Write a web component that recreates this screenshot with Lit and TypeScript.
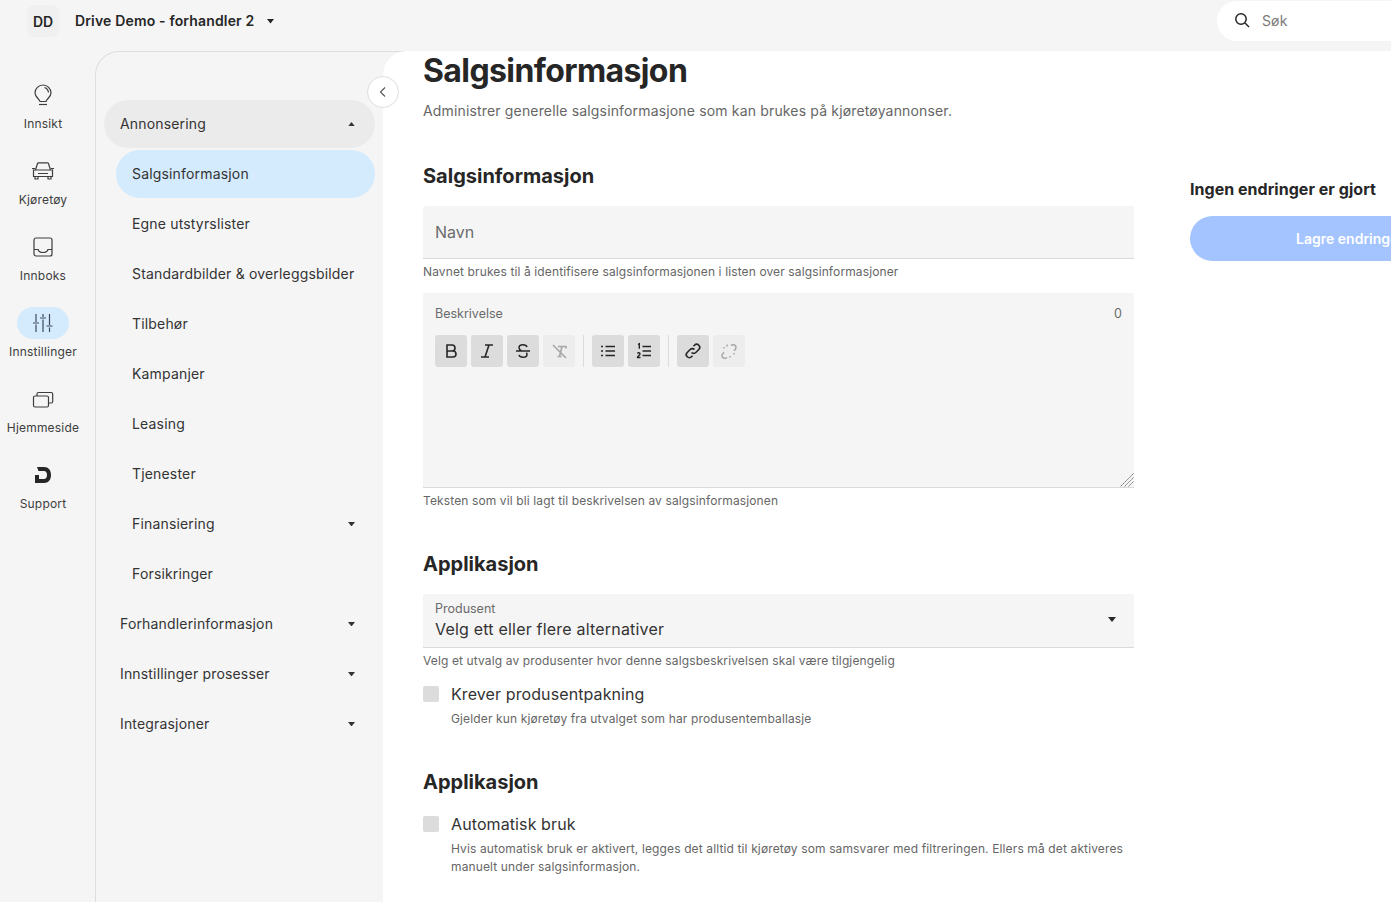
import { LitElement, html, css, svg } from "lit";
import { customElement } from "lit/decorators.js";

const caretDown = html`<svg class="caret" viewBox="0 0 8 5" width="7" height="4.500"><path d="M0 0h8L4 5z" fill="currentColor"/></svg>`;
const caretUp = html`<svg class="caret" viewBox="0 0 8 5" width="7" height="4.500"><path d="M0 5h8L4 0z" fill="currentColor"/></svg>`;
const caretLarge = html`<svg class="caret" viewBox="0 0 8 5" width="8" height="5"><path d="M0 0h8L4 5z" fill="currentColor"/></svg>`;

const railIcons: Record<string, unknown> = {
  bulb: svg`<path d="M10 19.500C9.500 17 5 15 5 11a8 8 0 0 1 16 0c0 4-4.500 6-5 8.500z"/><path d="M14.500 5.500a6 6 0 0 1 4 5"/><path d="M9 22.500h8"/>`,
  car: svg`<path d="M3.500 12h19v6.500h-19z"/><path d="M5.500 12l2-6.500c.1-.4.5-.7 1-.7h9c.5 0 .9.3 1 .7l2 6.500"/><path d="M2 10.500h3M21 10.500h3"/><path d="M5 18.500V21h3v-2.500M18 18.500V21h3v-2.500M8 15.500h10"/>`,
  inbox: svg`<rect x="4" y="4" width="18" height="18" rx="2"/><path d="M4 15.500h4c.8 2.500 2.300 3 5 3s4.200-.5 5-3h4"/>`,
  sliders: svg`<path d="M6 4v8M6 14.500V22M3 13h6M13 4v3M13 9.500V22M10 8h6M19.500 4v11M19.500 17.500V22M16.500 16h6"/>`,
  windows: svg`<rect x="3.500" y="10" width="15" height="11" rx="1.500"/><path d="M7 10V8a1.500 1.500 0 0 1 1.500-1.500h12.700a1.500 1.500 0 0 1 1.500 1.500v7.500a1.500 1.500 0 0 1-1.500 1.500h-2.700"/>`,
};

const railItems = [
  { icon: "bulb", label: "Innsikt" },
  { icon: "car", label: "Kjøretøy" },
  { icon: "inbox", label: "Innboks" },
  { icon: "sliders", label: "Innstillinger", active: true },
  { icon: "windows", label: "Hjemmeside" },
  { icon: "logo", label: "Support" },
];

type NavItem = { label: string; sub?: boolean; open?: boolean; selected?: boolean; caret?: "up" | "down" };
const navItems: NavItem[] = [
  { label: "Annonsering", open: true, caret: "up" },
  { label: "Salgsinformasjon", sub: true, selected: true },
  { label: "Egne utstyrslister", sub: true },
  { label: "Standardbilder & overleggsbilder", sub: true },
  { label: "Tilbehør", sub: true },
  { label: "Kampanjer", sub: true },
  { label: "Leasing", sub: true },
  { label: "Tjenester", sub: true },
  { label: "Finansiering", sub: true, caret: "down" },
  { label: "Forsikringer", sub: true },
  { label: "Forhandlerinformasjon", caret: "down" },
  { label: "Innstillinger prosesser", caret: "down" },
  { label: "Integrasjoner", caret: "down" },
];

const tool = (d: unknown, off = false) => html`<button class="tool ${off ? "off" : ""}"><svg viewBox="0 0 20 20" width="20" height="20" fill="none" stroke="currentColor" stroke-width="1.500">${d}</svg></button>`;

@customElement("app-root")
export class AppRoot extends LitElement {
  static styles = css`
    :host { display: block; width: 1391px; height: 902px; overflow: hidden; background: #f5f5f5; color: #262626; font-family: Inter, "Liberation Sans", sans-serif; font-size: 14px; letter-spacing: 0.17px; position: relative; }
    * { box-sizing: border-box; }
    .top { height: 51px; display: flex; align-items: flex-start; padding-left: 27px; }
    .avatar { width: 32px; height: 32px; margin-top: 5px; border-radius: 8px; background: #f0f0f0; display: flex; align-items: center; justify-content: center; font-weight: 600; font-size: 14px; letter-spacing: 0; }
    .org { margin: 13px 0 0 16px; height: 16px; line-height: 16px; font-weight: 600; font-size: 14px; letter-spacing: 0.16px; }
    .top .caret { margin: 19px 0 0 13px; }
    .search { margin: 1px -226px 0 auto; width: 400px; flex: none; height: 40px; border-radius: 20px; background: #fff; display: flex; align-items: center; padding: 0 0 2px 17px; gap: 12px; color: #7a7a7a; font-size: 14px; letter-spacing: 0.14px; }
    .search svg { color: #262626; }
    .body { display: flex; height: 851px; }
    .rail { width: 95px; flex: none; padding: 28px 9px 0 0; display: flex; flex-direction: column; gap: 4px; align-items: center; }
    .rail-item { height: 72px; display: flex; flex-direction: column; align-items: center; font-size: 12px; letter-spacing: 0.2px; color: #3d3d3d; }
    .pill { width: 52px; height: 32px; border-radius: 16px; display: flex; align-items: center; justify-content: center; margin-bottom: 5px; }
    .rail-item.active .pill { background: #d4eafd; }
    .rail-item span { line-height: 16px; white-space: nowrap; }
    .nav { width: 288px; flex: none; border-left: 1px solid #dedede; border-top: 1px solid #dedede; border-top-left-radius: 24px; padding: 48px 8px 0; display: flex; flex-direction: column; gap: 2px; position: relative; }
    .nav-item { height: 48px; border-radius: 24px; display: flex; align-items: center; justify-content: space-between; padding: 0 20px 2px 16px; color: #333; white-space: nowrap; }
    .nav-item .caret { margin-top: 2px; }
    .nav-item.sub { margin-left: 12px; }
    .nav-item.open { background: #ebebeb; }
    .nav-item.selected { background: #d4eafd; }
    .collapse { position: absolute; left: 271px; top: 24px; width: 32px; height: 32px; border-radius: 50%; background: #fff; border: 1px solid #dedede; display: flex; align-items: center; justify-content: center; z-index: 3; padding: 0; color: #555; }
    .topline { position: absolute; left: 287px; top: -1px; width: 24px; height: 1px; background: #dedede; }
    main { flex: 1; min-width: 0; background: #fff; border-top-left-radius: 24px; padding-left: 40px; display: flex; gap: 56px; position: relative; z-index: 2; }
    .content { width: 711px; flex: none; }
    h1 { margin: 0; font-size: 32px; line-height: 40px; font-weight: 700; letter-spacing: -0.6px; }
    .lead { margin: 10px 0 0; line-height: 20px; color: #666; font-size: 14px; letter-spacing: 0.16px; }
    h2 { margin: 0; font-size: 20px; line-height: 28px; font-weight: 700; letter-spacing: 0; }
    .s1 { margin-top: 41px; }
    .field { background: #f5f5f5; border-bottom: 1px solid #d9d9d9; border-radius: 2px 2px 0 0; display: block; width: 100%; position: relative; }
    .input { margin-top: 16px; height: 53px; padding: 0 12px; line-height: 52px; font-size: 16px; color: #6b6b6b; letter-spacing: 0; }
    .hint { font-size: 12px; letter-spacing: 0.12px; line-height: 18px; color: #666; margin: 4px 0 0; }
    .desc { margin-top: 12px; height: 195px; padding: 13px 0 0; }
    .desc-head { display: flex; justify-content: space-between; padding: 0 12px; font-size: 12.500px; letter-spacing: 0; line-height: 16px; color: #6b6b6b; }
    .toolbar { display: flex; gap: 4px; padding: 13px 12px 0; align-items: center; height: 45px; }
    .tool { width: 32px; height: 32px; border: 0; padding: 0; border-radius: 3px; background: #dcdcdc; color: #262626; display: flex; align-items: center; justify-content: center; }
    .tool.off { background: #ededed; color: #a8a8a8; }
    .sep { width: 1px; height: 32px; background: #dcdcdc; margin: 0 4px; }
    textarea { display: block; width: 100%; height: 120px; border: 0; outline: 0; background: transparent; resize: none; padding: 0; margin: 0; }
    .grip { position: absolute; right: 0; bottom: 0; display: block; }
    .s2 { margin-top: 40px; }
    .select { margin-top: 16px; height: 54px; padding: 7px 12px 0; }
    .select small { display: block; font-size: 12.500px; letter-spacing: 0; line-height: 16px; color: #6b6b6b; }
    .select div { font-size: 16px; letter-spacing: 0.2px; line-height: 24px; color: #333; }
    .select .caret { position: absolute; right: 18px; top: 23px; }
    .check { display: flex; align-items: center; gap: 12px; font-size: 16px; letter-spacing: 0.1px; line-height: 24px; color: #333; }
    .box { width: 16px; height: 16px; border-radius: 2px; background: #dcdcdc; flex: none; }
    .help { margin: 4px 0 0 28px; font-size: 12px; letter-spacing: 0.13px; line-height: 18px; color: #666; }
    .c1 { margin-top: 12px; }
    .s3 { margin-top: 40px; }
    .c2 { margin-top: 16px; }
    aside { width: 318px; flex: none; padding-top: 127px; }
    aside h3 { margin: 0; font-size: 16px; line-height: 22px; font-weight: 700; letter-spacing: 0.03px; }
    .save { margin-top: 16px; width: 318px; height: 45px; border: 0; border-radius: 23px; background: #a3c4ff; color: #fff; font: 600 14px Inter, "Liberation Sans", sans-serif; padding: 0 0 1px 2px; }
  `;

  private railIcon(icon: string) {
    if (icon === "logo") {
      return html`<svg viewBox="0 0 26 26" width="26" height="26"><path d="M7 5h7c4.500 0 7 3.200 7 8s-2.500 8-7 8H5v-8h4v4h5c1.800 0 3-1.500 3-4s-1.200-4-3-4H8.500z" fill="#262626"/></svg>`;
    }
    const color = icon === "sliders" ? "#3b4a5a" : "#3d3d3d";
    return html`<svg viewBox="0 0 26 26" width="26" height="26" fill="none" stroke=${color} stroke-width="1.200">${railIcons[icon]}</svg>`;
  }

  render() {
    return html`
      <div class="top">
        <div class="avatar">DD</div>
        <div class="org">Drive Demo - forhandler 2</div>
        ${caretDown}
        <div class="search">
          <svg viewBox="0 0 16 16" width="16" height="16" fill="none" stroke="currentColor" stroke-width="1.500"><circle cx="7" cy="7" r="5.200"/><path d="M11 11l4 4"/></svg>
          <span>Søk</span>
        </div>
      </div>
      <div class="body">
        <div class="rail">
          ${railItems.map((r) => html`<div class="rail-item ${r.active ? "active" : ""}"><div class="pill">${this.railIcon(r.icon)}</div><span>${r.label}</span></div>`)}
        </div>
        <nav class="nav">
          <div class="topline"></div>
          <button class="collapse"><svg viewBox="0 0 12 12" width="12" height="12" fill="none" stroke="currentColor" stroke-width="1.100"><path d="M8 1.500L3.500 6 8 10.500"/></svg></button>
          ${navItems.map((n) => html`<div class="nav-item ${n.sub ? "sub" : ""} ${n.open ? "open" : ""} ${n.selected ? "selected" : ""}"><span>${n.label}</span>${n.caret === "up" ? caretUp : n.caret === "down" ? caretDown : ""}</div>`)}
        </nav>
        <main>
          <div class="content">
            <h1>Salgsinformasjon</h1>
            <p class="lead">Administrer generelle salgsinformasjone som kan brukes på kjøretøyannonser.</p>
            <h2 class="s1">Salgsinformasjon</h2>
            <div class="field input">Navn</div>
            <p class="hint">Navnet brukes til å identifisere salgsinformasjonen i listen over salgsinformasjoner</p>
            <div class="field desc">
              <div class="desc-head"><span>Beskrivelse</span><span>0</span></div>
              <div class="toolbar">
                ${tool(svg`<path d="M6 4h5a3 3 0 0 1 0 6H6zM6 10h6a3 3 0 0 1 0 6H6z" stroke-width="1.600"/>`)}
                ${tool(svg`<path d="M8 4h8M4 16h8M12 4L8 16" stroke-width="1.600"/>`)}
                ${tool(svg`<path d="M3 10h14M14 6c-.5-1.500-2-2.200-4-2.200-2.200 0-4 1-4 3 0 1.500 1 2.400 2.500 3.200M6 14c.5 1.500 2 2.200 4 2.200s4-1 4-2.800c0-.7-.2-1.300-.6-1.800"/>`)}
                ${tool(svg`<path d="M4 4l13 13M9 5.500h8v2M13 5.500L10.500 15.500M8.500 15.500h4" stroke-width="1.700"/>`, true)}
                <div class="sep"></div>
                ${tool(svg`<path d="M7.500 5.500H17M7.500 10H17M7.500 14.500H17M3 5.500h2M3 10h2M3 14.500h2" stroke-width="1.400"/>`)}
                ${tool(svg`<path d="M8.500 5.500H17M8.500 10H17M8.500 14.500H17M4 3.500l1.300-.8v5M3.500 12.500c.4-1 2.500-1 2.500.4 0 1.200-2.500 2-2.500 3.600H6.500" stroke-width="1.400"/>`)}
                <div class="sep"></div>
                ${tool(svg`<path d="M8.500 11.500a3 3 0 0 0 4.300 0l3-3a3 3 0 0 0-4.300-4.300l-1 1M11.500 8.500a3 3 0 0 0-4.300 0l-3 3a3 3 0 0 0 4.300 4.300l1-1" stroke-width="1.600"/>`)}
                ${tool(svg`<path d="M12 4.500c1-1.200 5-1.500 5 2 0 1.500-1 2.500-2.200 3.200M15 12v1.500M8 16.500c-1 1-5 1.500-5-2 0-1.500 1-2.500 2.200-3.200M5 7.500V6M8 3.500v2M11 15v1.500" stroke-width="1.500"/>`, true)}
              </div>
              <textarea aria-label="Beskrivelse"></textarea>
              <svg class="grip" viewBox="0 0 14 14" width="14" height="14" fill="none" stroke="#777" stroke-width="1"><path d="M13.500 .5L.5 13.500M13.500 4.500l-9 9M13.500 8.500l-5 5" stroke-dasharray="2 .7"/></svg>
            </div>
            <p class="hint">Teksten som vil bli lagt til beskrivelsen av salgsinformasjonen</p>
            <h2 class="s2">Applikasjon</h2>
            <div class="field select">
              <small>Produsent</small>
              <div>Velg ett eller flere alternativer</div>
              ${caretLarge}
            </div>
            <p class="hint">Velg et utvalg av produsenter hvor denne salgsbeskrivelsen skal være tilgjengelig</p>
            <div class="check c1"><span class="box"></span>Krever produsentpakning</div>
            <p class="help">Gjelder kun kjøretøy fra utvalget som har produsentemballasje</p>
            <h2 class="s3">Applikasjon</h2>
            <div class="check c2"><span class="box"></span>Automatisk bruk</div>
            <p class="help">Hvis automatisk bruk er aktivert, legges det alltid til kjøretøy som samsvarer med filtreringen. Ellers må det aktiveres manuelt under salgsinformasjon.</p>
          </div>
          <aside>
            <h3>Ingen endringer er gjort</h3>
            <button class="save">Lagre endringer</button>
          </aside>
        </main>
      </div>
    `;
  }
}
